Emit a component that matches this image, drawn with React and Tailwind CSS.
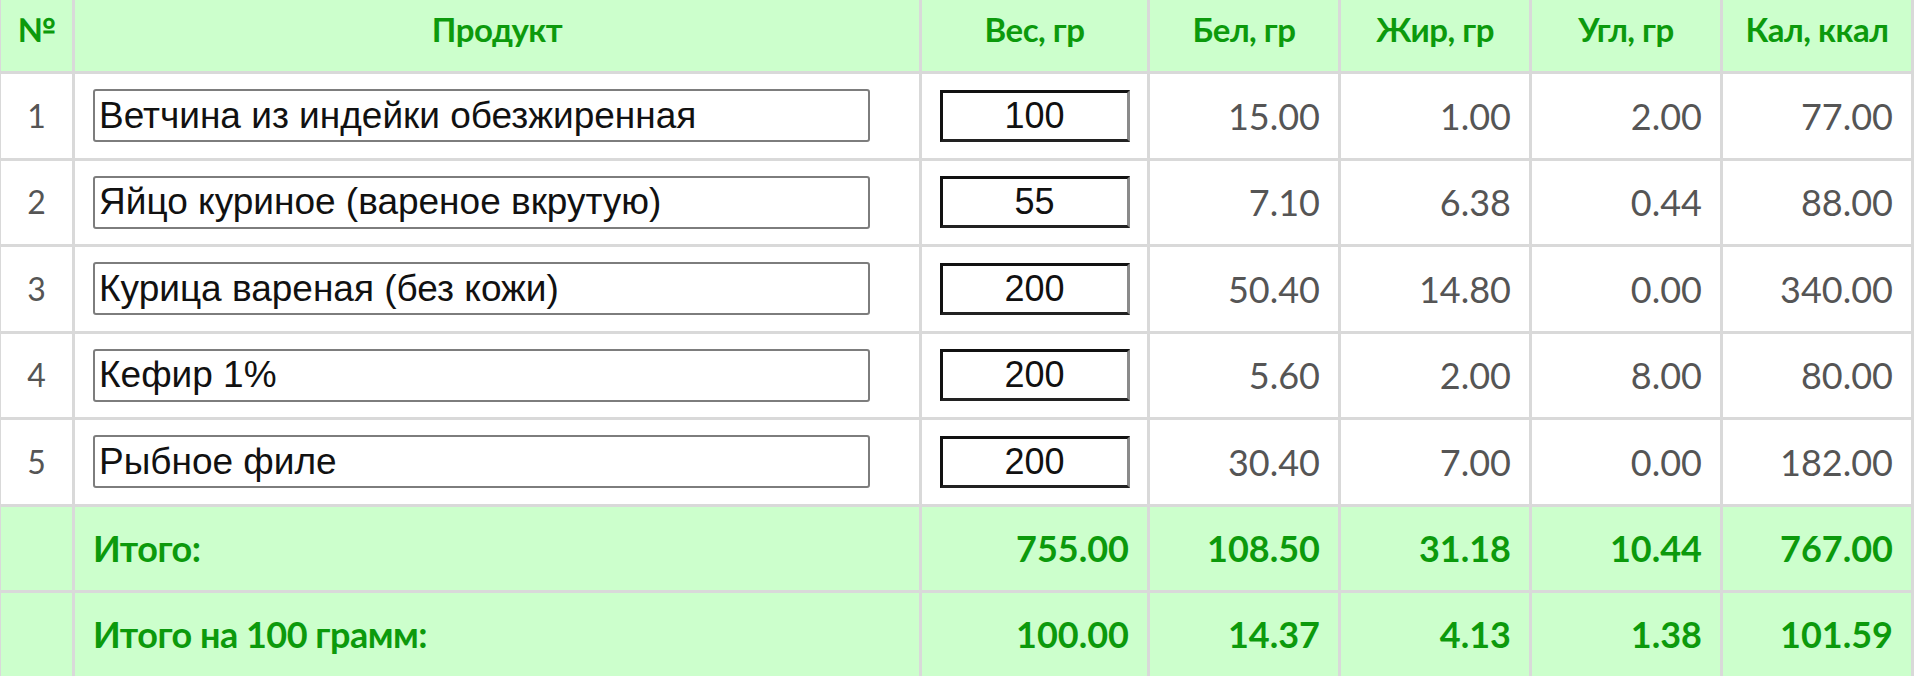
import React from "react";

const rows = [
  { n: 1, name: "Ветчина из индейки обезжиренная", w: "100", b: "15.00", f: "1.00", c: "2.00", k: "77.00" },
  { n: 2, name: "Яйцо куриное (вареное вкрутую)", w: "55", b: "7.10", f: "6.38", c: "0.44", k: "88.00" },
  { n: 3, name: "Курица вареная (без кожи)", w: "200", b: "50.40", f: "14.80", c: "0.00", k: "340.00" },
  { n: 4, name: "Кефир 1%", w: "200", b: "5.60", f: "2.00", c: "8.00", k: "80.00" },
  { n: 5, name: "Рыбное филе", w: "200", b: "30.40", f: "7.00", c: "0.00", k: "182.00" },
];

const heights = ["h-[87px]", "h-[86px]", "h-[87px]", "h-[86px]", "h-[87px]"];

const cell = "border-[3px] border-[#d9d9d9]";
const headCell = `${cell} border-t-0 text-center font-bold text-[#0c9a0c] text-[33px] pb-[12px] tracking-[-0.5px]`;
const numCell = `${cell} text-right pr-[18px] text-[#555] text-[36px]`;
const totCell = `${cell} text-right pr-[18px] font-bold text-[#0c9a0c] text-[36px]`;

export default function App() {
  return (
    <div className="w-[1920px] h-[676px] overflow-hidden bg-white">
      <table
        className="table-fixed border-collapse w-[1913px] -ml-[2px]"
        style={{ fontFamily: "Lato, 'Noto Sans', sans-serif" }}
      >
        <colgroup>
          <col className="w-[74px]" />
          <col className="w-[847px]" />
          <col className="w-[228px]" />
          <col className="w-[191px]" />
          <col className="w-[191px]" />
          <col className="w-[191px]" />
          <col className="w-[191px]" />
        </colgroup>
        <thead>
          <tr className="h-[72px] bg-[#ccffcc]">
            <th className={headCell}>№</th>
            <th className={headCell}>Продукт</th>
            <th className={headCell}>Вес, гр</th>
            <th className={headCell}>Бел, гр</th>
            <th className={headCell}>Жир, гр</th>
            <th className={headCell}>Угл, гр</th>
            <th className={headCell}>Кал, ккал</th>
          </tr>
        </thead>
        <tbody>
          {rows.map((r, i) => (
            <tr key={r.n} className={`${heights[i]} bg-white`}>
              <td className={`${cell} text-center text-[#555] text-[32px]`}>{r.n}</td>
              <td className={`${cell} pl-[18px] pr-[48px]`}>
                <input
                  readOnly
                  value={r.name}
                  className="block w-[777px] h-[53px] border-2 border-[#7d7d7d] rounded-[3px] px-[4px] text-[37px] text-[#111] bg-white outline-none"
                  style={{ fontFamily: "'Liberation Sans', Arial, sans-serif" }}
                />
              </td>
              <td className={`${cell}`}>
                <input
                  readOnly
                  value={r.w}
                  className="block mx-auto w-[190px] h-[52px] border-[3px] border-t-[#111] border-l-[#111] border-b-[#222] border-r-[#8a8a8a] text-center text-[36px] text-[#111] bg-white outline-none"
                  style={{ fontFamily: "'Liberation Sans', Arial, sans-serif" }}
                />
              </td>
              <td className={numCell}>{r.b}</td>
              <td className={numCell}>{r.f}</td>
              <td className={numCell}>{r.c}</td>
              <td className={numCell}>{r.k}</td>
            </tr>
          ))}
          <tr className="h-[86px] bg-[#ccffcc]">
            <td className={cell}></td>
            <td className={`${cell} pl-[18px] font-bold text-[#0c9a0c] text-[36px] tracking-[-0.5px]`}>Итого:</td>
            <td className={totCell}>755.00</td>
            <td className={totCell}>108.50</td>
            <td className={totCell}>31.18</td>
            <td className={totCell}>10.44</td>
            <td className={totCell}>767.00</td>
          </tr>
          <tr className="h-[86px] bg-[#ccffcc]">
            <td className={cell}></td>
            <td className={`${cell} pl-[18px] font-bold text-[#0c9a0c] text-[36px] tracking-[-0.5px]`}>Итого на 100 грамм:</td>
            <td className={totCell}>100.00</td>
            <td className={totCell}>14.37</td>
            <td className={totCell}>4.13</td>
            <td className={totCell}>1.38</td>
            <td className={totCell}>101.59</td>
          </tr>
        </tbody>
      </table>
    </div>
  );
}
